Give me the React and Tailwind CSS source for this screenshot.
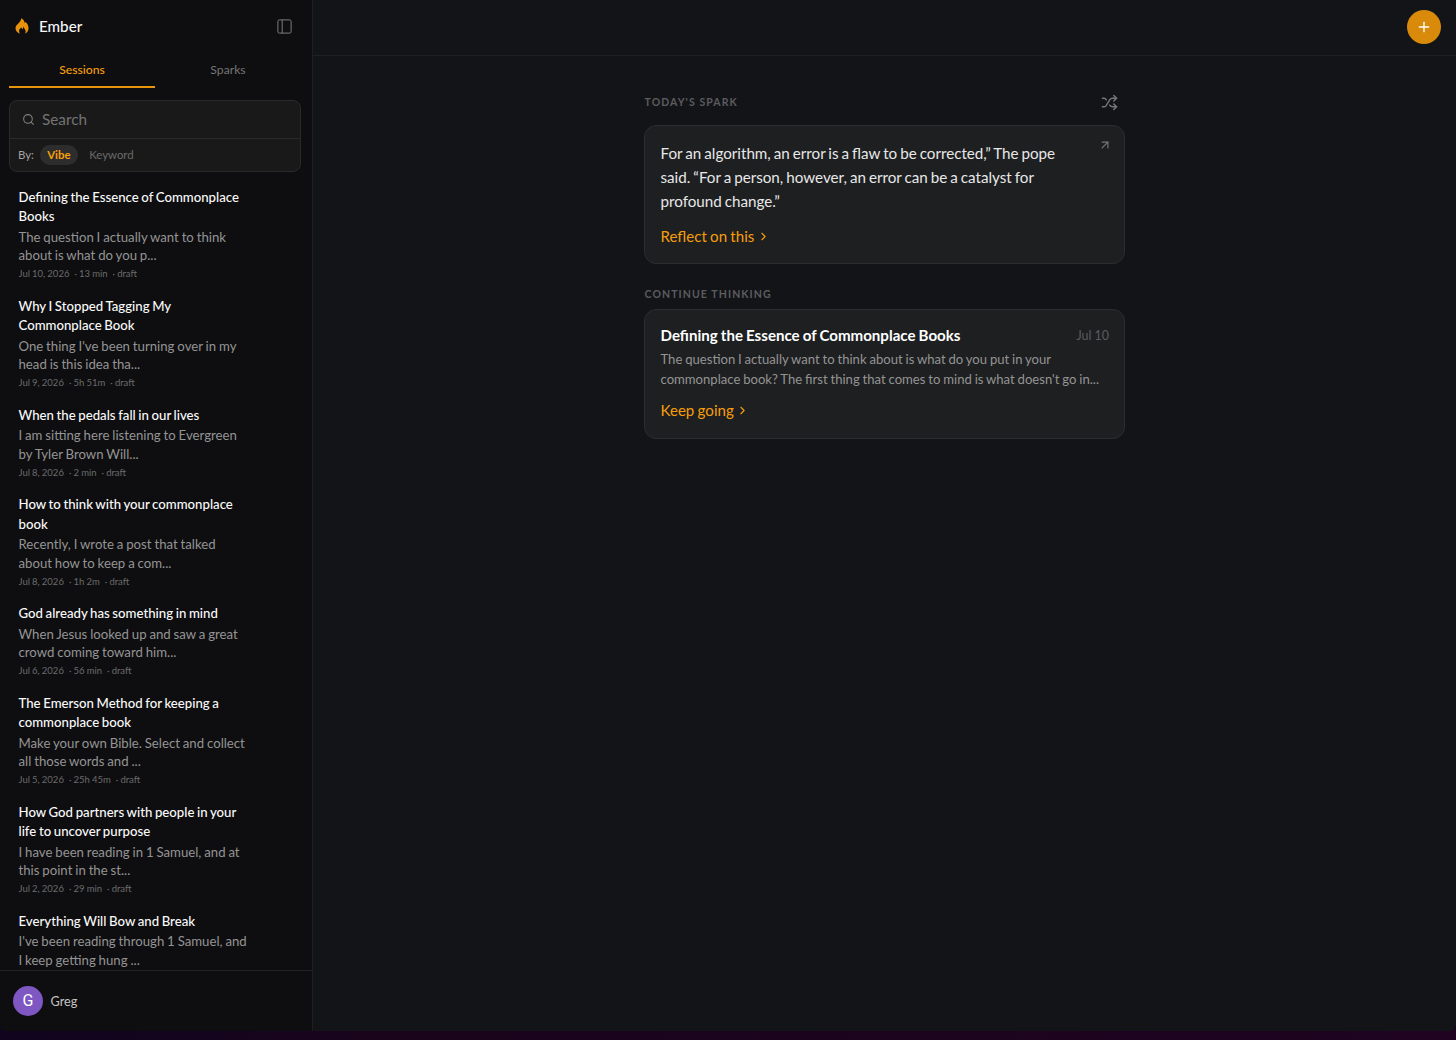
import React, { useState } from "react";
import { ArrowUpRight, ChevronRight, Plus, Search, Shuffle } from "lucide-react";

const sessions = [
  {
    title: ["Defining the Essence of Commonplace", "Books"],
    excerpt: ["The question I actually want to think", "about is what do you p..."],
    date: "Jul 10, 2026",
    length: "13 min",
  },
  {
    title: ["Why I Stopped Tagging My", "Commonplace Book"],
    excerpt: ["One thing I've been turning over in my", "head is this idea tha..."],
    date: "Jul 9, 2026",
    length: "5h 51m",
  },
  {
    title: ["When the pedals fall in our lives"],
    excerpt: ["I am sitting here listening to Evergreen", "by Tyler Brown Will..."],
    date: "Jul 8, 2026",
    length: "2 min",
  },
  {
    title: ["How to think with your commonplace", "book"],
    excerpt: ["Recently, I wrote a post that talked", "about how to keep a com..."],
    date: "Jul 8, 2026",
    length: "1h 2m",
  },
  {
    title: ["God already has something in mind"],
    excerpt: ["When Jesus looked up and saw a great", "crowd coming toward him..."],
    date: "Jul 6, 2026",
    length: "56 min",
  },
  {
    title: ["The Emerson Method for keeping a", "commonplace book"],
    excerpt: ["Make your own Bible. Select and collect", "all those words and ..."],
    date: "Jul 5, 2026",
    length: "25h 45m",
  },
  {
    title: ["How God partners with people in your", "life to uncover purpose"],
    excerpt: ["I have been reading in 1 Samuel, and at", "this point in the st..."],
    date: "Jul 2, 2026",
    length: "29 min",
  },
  {
    title: ["Everything Will Bow and Break"],
    excerpt: ["I've been reading through 1 Samuel, and", "I keep getting hung ..."],
  },
];

const Flame = () => (
  <svg viewBox="0 0 14 16" className="h-4 w-3.5" fill="#e8920c">
    <path d="M6.2 0.2C8.6 1.3 9.4 3.2 9.8 4.9C10.1 4.7 10.3 4.4 10.5 4C12.5 5.6 13.5 7.9 13.5 10.2C13.5 12.7 12.2 14.7 10 15.7C10.8 14.3 10.9 12.7 10.1 11.4C9.6 10.6 8.8 9.8 8.4 8.8C7.9 9.8 8 10.8 7.8 11.5C7 11.1 6.6 10.4 6.5 9.6C5 10.6 4.1 11.6 4.1 13.2C4.1 14.2 4.4 15 4.9 15.7C2.2 14.9 0.5 12.8 0.5 10.1C0.5 6.2 6.2 4.6 6.2 0.2Z" />
  </svg>
);

const SessionItem = ({ session }) => (
  <li className="px-[18.5px] pt-[9px] pb-[6.6px]">
    <h3 className="text-[13.2px] leading-[19.6px] font-medium [word-spacing:-0.7px] text-[#fafafa]">
      {session.title.map((line) => (
        <span key={line} className="block whitespace-nowrap">
          {line}
        </span>
      ))}
    </h3>
    <p className="mt-[1px] text-[13.2px] leading-[18.4px] [word-spacing:-0.5px] text-[#949494]">
      {session.excerpt.map((line) => (
        <span key={line} className="block whitespace-nowrap">
          {line}
        </span>
      ))}
    </p>
    {session.date && (
      <div className="mt-[2.4px] flex gap-[5px] text-[9.5px] leading-[14px] [word-spacing:-0.3px] text-[#6b6b6b]">
        <span>{session.date}</span>
        <span>· {session.length}</span>
        <span>· draft</span>
      </div>
    )}
  </li>
);

const Sidebar = () => {
  const [tab, setTab] = useState("Sessions");
  const [mode, setMode] = useState("Vibe");
  return (
    <aside className="flex w-[313px] shrink-0 flex-col border-r border-[#1f1f22] bg-[#0e0e10]">
      <div className="flex h-[52px] shrink-0 items-center pr-[20px] pl-[15px]">
        <Flame />
        <span className="ml-[10px] text-[15.2px] font-medium text-[#f7f7f7]">Ember</span>
        <button className="ml-auto">
          <svg viewBox="0 0 15 15" className="h-[15px] w-[15px]" fill="none" stroke="#7c7c7c">
            <rect x="0.9" y="0.9" width="13.2" height="13.2" rx="1.5" />
            <path d="M5.2 0.9v13.2" />
          </svg>
        </button>
      </div>
      <div className="mx-[9px] flex h-[36px] shrink-0">
        {["Sessions", "Sparks"].map((name) => (
          <button
            key={name}
            onClick={() => setTab(name)}
            className={
              tab === name
                ? "w-[146px] border-b-2 border-[#e8930c] pt-[2px] text-[12.2px] font-medium text-[#f59e0b]"
                : "w-[146px] border-b-2 border-transparent pt-[2px] text-[12.2px] text-[#757575]"
            }
          >
            {name}
          </button>
        ))}
      </div>
      <div className="mt-[12px] mr-[11px] ml-[9px] h-[72px] shrink-0 rounded-lg border border-[#2a2a2a] bg-[#191919]">
        <div className="flex h-[38px] items-center border-b border-[#2a2a2a] pl-[12px]">
          <Search className="h-[13px] w-[13px] text-[#808080]" />
          <span className="ml-[7px] text-[15.3px] text-[#737373]">Search</span>
        </div>
        <div className="flex h-[32px] items-center pl-[8px] text-[11.4px]">
          <span className="text-[#a3a3a3]">By:</span>
          {["Vibe", "Keyword"].map((name) => (
            <button
              key={name}
              onClick={() => setMode(name)}
              className={
                mode === name
                  ? "ml-[6px] h-5 rounded-full bg-[#2d2d2d] px-[7.2px] font-bold text-[#f59e0b]"
                  : "ml-[4.5px] h-5 px-[7px] text-[#6b6b6b]"
              }
            >
              {name}
            </button>
          ))}
        </div>
      </div>
      <ul className="mt-[6.8px] min-h-0 flex-1 overflow-hidden">
        {sessions.map((session) => (
          <SessionItem key={session.title[0]} session={session} />
        ))}
      </ul>
      <div className="flex h-[61px] shrink-0 items-center border-t border-[#222224] pl-[13px]">
        <div className="flex h-[30px] w-[30px] items-center justify-center rounded-full bg-[#7e57c2] font-[Roboto] text-[16px] text-white">
          G
        </div>
        <span className="ml-[7.5px] pt-px text-[12.7px] text-[#c4c4c4]">Greg</span>
      </div>
    </aside>
  );
};

const CardLink = ({ children }) => (
  <button className="flex items-center text-[15.1px] leading-[22px] [word-spacing:-0.6px] text-[#f59e0b]">
    {children}
    <ChevronRight className="ml-[2.5px] h-[13px] w-[13px]" />
  </button>
);

const App = () => {
  return (
    <div className="flex h-[1040px] w-[1456px] flex-col bg-linear-to-r from-[#10041f] via-[#19041c] via-25% to-[#1f0320] font-[Lato,sans-serif]">
      <div className="flex h-[1031px] overflow-hidden rounded-b-md bg-[#131418]">
        <Sidebar />
        <main className="flex-1">
          <header className="flex h-[56px] items-center justify-end border-b border-[#1f2024] pr-[15px] pb-[2px]">
            <button className="flex h-[34px] w-[34px] items-center justify-center rounded-full bg-[#d98a0b] text-white">
              <Plus className="h-4 w-4" />
            </button>
          </header>
          <div className="mx-auto w-[481px]">
            <div className="mt-[36px] flex h-[20px] items-center justify-between pr-[7.5px]">
              <h2 className="pt-px pl-[0.5px] text-[10.5px] font-bold tracking-[1.1px] text-[#5c5c5f]">TODAY'S SPARK</h2>
              <Shuffle className="h-[17px] w-[17px] text-[#77777a]" />
            </div>
            <section className="relative mt-[13px] h-[139px] rounded-xl border border-[#2c2d2f] bg-[#1e1f21] px-[15.5px] pt-[15px]">
              <p className="text-[15.2px] leading-[24px] [word-spacing:-0.9px] whitespace-nowrap text-[#e8e8e8]">
                For an algorithm, an error is a flaw to be corrected,” The pope
                <br />
                said. “For a person, however, an error can be a catalyst for
                <br />
                profound change.”
              </p>
              <div className="mt-[12px]">
                <CardLink>Reflect on this</CardLink>
              </div>
              <ArrowUpRight className="absolute top-[12px] right-[12px] h-[14px] w-[14px] text-[#77777a]" />
            </section>
            <h2 className="mt-[21.5px] pl-[0.5px] text-[10.5px] leading-[16px] font-bold tracking-[1.1px] text-[#5c5c5f]">
              CONTINUE THINKING
            </h2>
            <section className="mt-[7.5px] h-[130px] rounded-xl border border-[#2c2d2f] bg-[#1e1f21] pr-[15px] pl-[15.5px] pt-[12px]">
              <div className="flex items-center justify-between leading-[24px]">
                <h3 className="text-[15.1px] font-bold [word-spacing:-0.6px] text-white">
                  Defining the Essence of Commonplace Books
                </h3>
                <span className="pt-[2px] text-[12.4px] text-[#5c5c5f]">Jul 10</span>
              </div>
              <p className="mt-px text-[13.1px] leading-[20px] [word-spacing:-0.5px] whitespace-nowrap text-[#949494]">
                The question I actually want to think about is what do you put in your
                <br />
                commonplace book? The first thing that comes to mind is what doesn't go in...
              </p>
              <div className="mt-[10px]">
                <CardLink>Keep going</CardLink>
              </div>
            </section>
          </div>
        </main>
      </div>
    </div>
  );
};

export default App;
